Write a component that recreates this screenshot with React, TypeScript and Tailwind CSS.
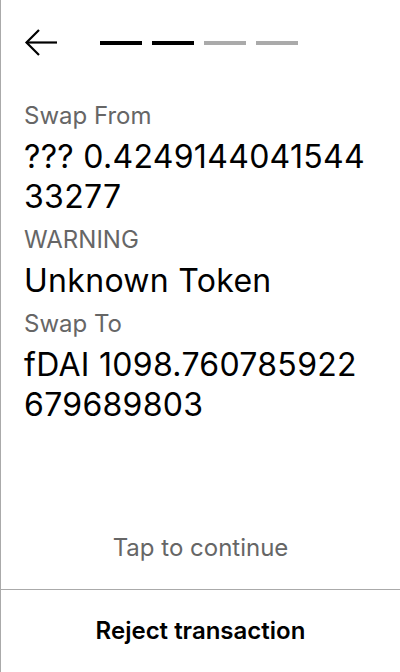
const font = { fontFamily: 'Inter, "Noto Sans", sans-serif' }

function BackArrow() {
  return (
    <svg width="34" height="30" viewBox="0 0 34 30" fill="none" stroke="#000" strokeWidth="2.2">
      <path d="M33 14.5H2.5" />
      <path d="M15 2L2.5 14.5L15 27" />
    </svg>
  )
}

function Steps({ total, done }: { total: number; done: number }) {
  return (
    <div className="flex gap-[10px]">
      {Array.from({ length: total }).map((_, i) => (
        <div key={i} className={i < done ? 'h-[4px] w-[42px] bg-black' : 'h-[4px] w-[42px] bg-[#aaaaaa]'} />
      ))}
    </div>
  )
}

// value lines are split the way the device wrapped them
function Field({ label, lines }: { label: string; lines: string[] }) {
  return (
    <div>
      <div className="text-[24px] leading-[28px] text-[#666666]">{label}</div>
      <div className="mt-[7px] text-[32px] leading-[40px] tracking-[0.3px] text-black">
        {lines.map((l) => (
          <div key={l} className="whitespace-nowrap">{l}</div>
        ))}
      </div>
    </div>
  )
}

export default function App() {
  return (
    <div style={font} className="flex h-[672px] w-[400px] flex-col border-l border-[#aaaaaa] bg-white">
      <div className="flex items-center gap-[42px] px-[23px] pt-[28px]">
        <BackArrow />
        <Steps total={4} done={2} />
      </div>
      <div className="mt-[44px] flex flex-col gap-[9px] px-[23px]">
        <Field label="Swap From" lines={['??? 0.4249144041544', '33277']} />
        <Field label="WARNING" lines={['Unknown Token']} />
        <Field label="Swap To" lines={['fDAI 1098.760785922', '679689803']} />
      </div>
      <div className="mt-auto pb-[27px] text-center text-[24px] leading-[28px] text-[#666666]">Tap to continue</div>
      <div className="flex h-[83px] items-center justify-center border-t border-[#aaaaaa] text-[24px] leading-[28px] font-semibold text-black">
        Reject transaction
      </div>
    </div>
  )
}
